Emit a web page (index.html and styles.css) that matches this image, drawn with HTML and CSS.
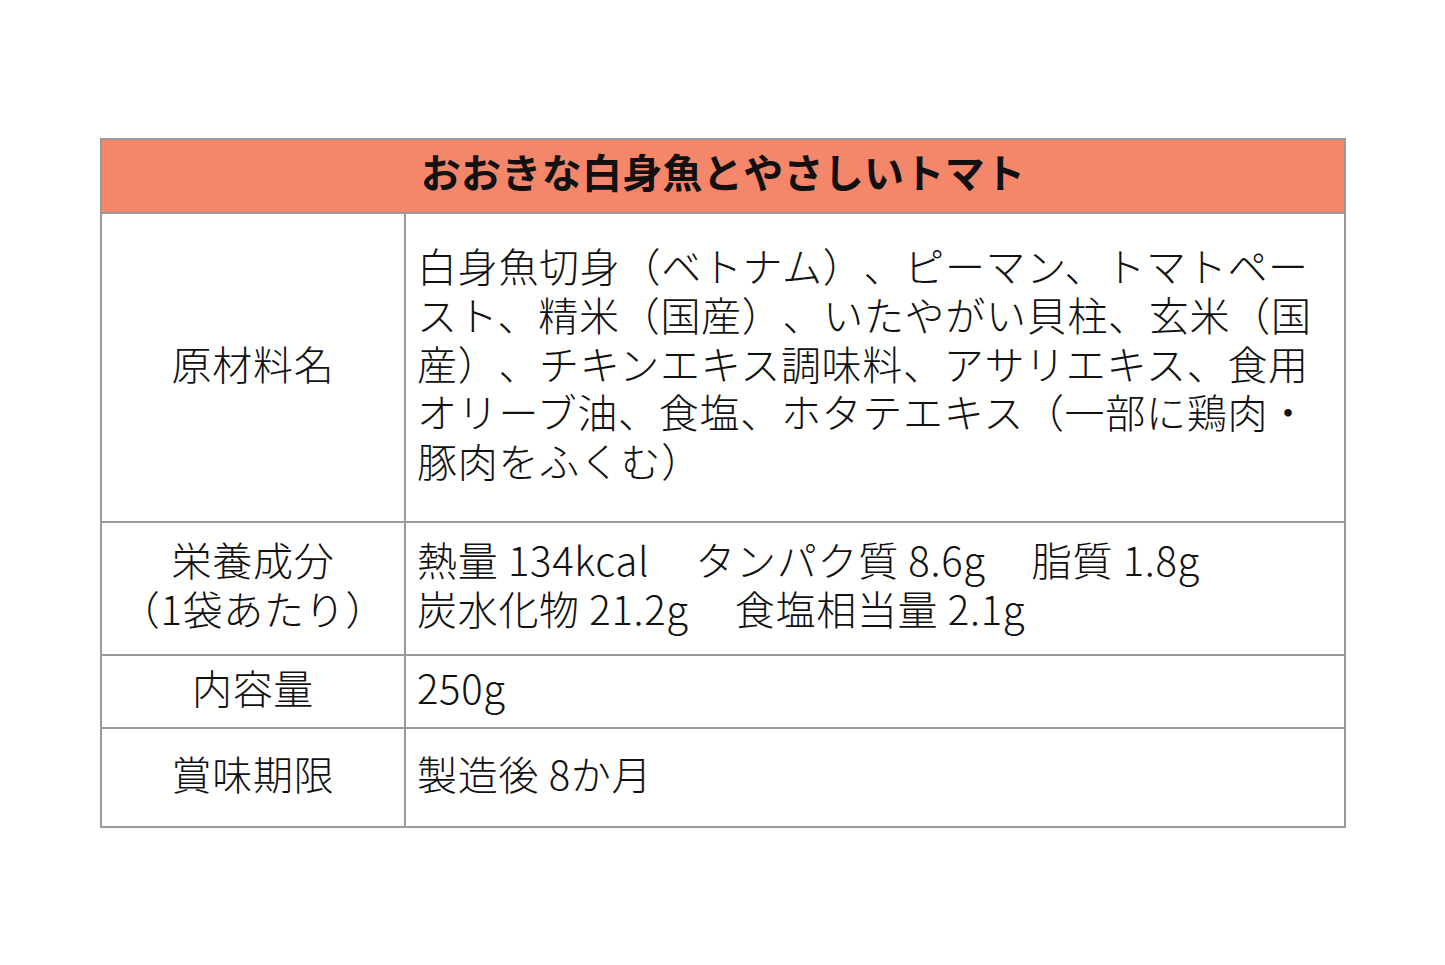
FILE: index.html
```html
<!DOCTYPE html>
<html lang="ja">
<head>
<meta charset="utf-8">
<link rel="stylesheet" href="styles.css">
</head>
<body>
<div class="page">
<table class="spec">
  <colgroup><col class="c1"><col class="c2"></colgroup>
  <tr class="r-head"><th colspan="2">おおきな白身魚とやさしいトマト</th></tr>
  <tr class="r-ing">
    <td class="label">原材料名</td>
    <td class="val">白身魚切身（ベトナム）、ピーマン、トマトペー<br>スト、精米（国産）、いたやがい貝柱、玄米（国<br>産）、チキンエキス調味料、アサリエキス、食用<br>オリーブ油、食塩、ホタテエキス（一部に鶏肉・<br>豚肉をふくむ）</td>
  </tr>
  <tr class="r-nut">
    <td class="label">栄養成分<br>（1袋あたり）</td>
    <td class="val">熱量 134kcal<span class="gap">　</span>タンパク質 8.6g<span class="gap">　</span>脂質 1.8g<br>炭水化物 21.2g<span class="gap">　</span>食塩相当量 2.1g</td>
  </tr>
  <tr class="r-vol">
    <td class="label">内容量</td>
    <td class="val">250g</td>
  </tr>
  <tr class="r-exp">
    <td class="label">賞味期限</td>
    <td class="val">製造後 8か月</td>
  </tr>
</table>
</div>
</body>
</html>
```
FILE: styles.css
```css
html, body {
  margin: 0;
  padding: 0;
  background: #ffffff;
}
.page {
  padding: 138px 0 0 100px;
}
.spec {
  border-collapse: collapse;
  width: 1246px;
  table-layout: fixed;
  font-family: "Noto Sans CJK JP", "Noto Sans", sans-serif;
  font-weight: 300;
  font-size: 40px;
  line-height: 48.7px;
  letter-spacing: 0.7px;
  text-spacing-trim: space-all;
  color: #111;
}
.c1 { width: 304px; }
.spec th, .spec td {
  border: 2px solid #9a9a9a;
  padding: 0 0 9px 0;
  vertical-align: middle;
}
.r-head { height: 74px; }
.r-head th {
  background: #f4866a;
  font-weight: 700;
  text-align: center;
  letter-spacing: 0.3px;
}
.label {
  text-align: center;
}
.spec td.val {
  text-align: left;
  padding-left: 11px;
}
.gap {
  letter-spacing: 6px;
}
.r-ing { height: 309px; }
.r-nut { height: 133px; }
.r-vol { height: 73px; }
.r-exp { height: 99px; }
```
